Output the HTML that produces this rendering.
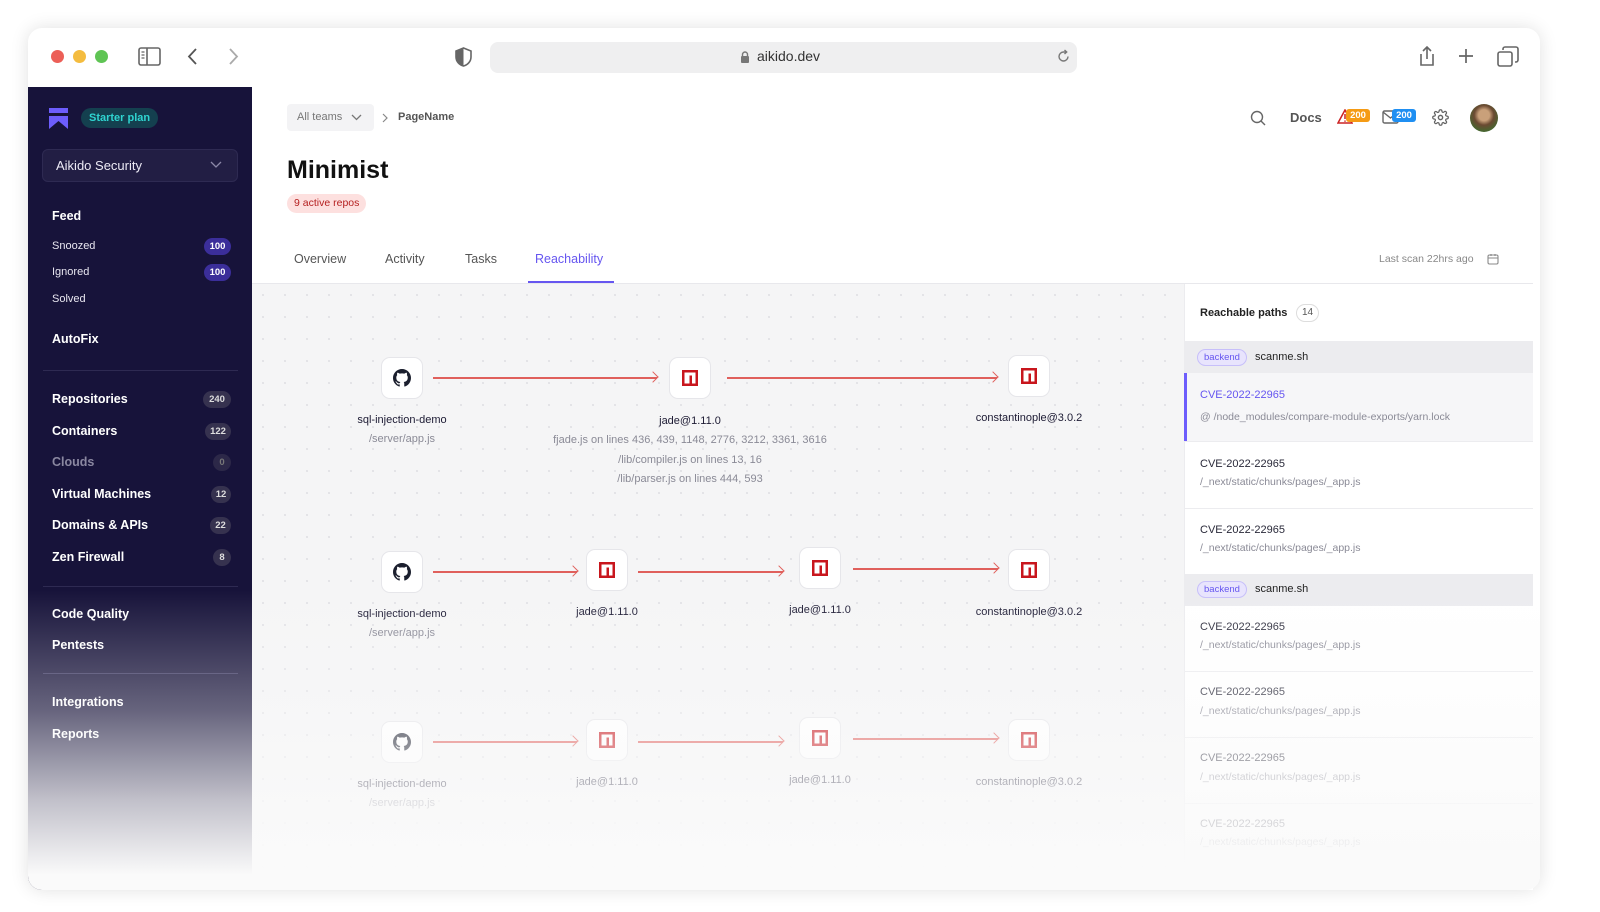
<!DOCTYPE html>
<html><head><meta charset="utf-8"><style>
*{box-sizing:border-box;margin:0;padding:0}
body{width:1600px;height:912px;background:#fff;font-family:"Liberation Sans",sans-serif;position:relative;overflow:hidden}
.a{position:absolute}
.win{left:28px;top:28px;width:1512px;height:862px;border-radius:14px;background:#fff;box-shadow:0 0 18px rgba(0,0,0,.12);overflow:hidden}
.side{left:28px;top:87px;width:224px;height:803px;background:#17133a;border-radius:0 0 0 14px}
.main{left:252px;top:93px;width:1281px;height:797px;background:#fff;border-radius:12px 12px 0 0;overflow:hidden}
.graph{left:252px;top:284px;width:932px;height:606px;background-color:#f5f5f6;background-image:radial-gradient(#e2e2e6 1px,transparent 1.2px);background-size:22px 22px}
.si{color:#fff;font-size:12.5px;font-weight:bold;left:52px}
.ss{color:#e8e6f0;font-size:11px;left:52px}
.bd{right:auto;font-size:9.5px;font-weight:bold;color:#fff;border-radius:10px;text-align:center;line-height:17px;height:17px}
.node{width:42px;height:42px;background:#fff;border:1px solid #e6e6ea;border-radius:9px;display:flex;align-items:center;justify-content:center}
.lbl{font-size:11px;color:#1c1a33;text-align:center;width:200px;margin-left:-100px}
.sub{font-size:11px;color:#8a8a96;text-align:center;width:320px;margin-left:-160px;line-height:19.5px}
.ln{height:1.5px;background:#e0605c}
.ln:after{content:"";position:absolute;right:0;top:-4px;width:7px;height:7px;border-top:1.5px solid #e0605c;border-right:1.5px solid #e0605c;transform:rotate(45deg)}
.cve{left:1200px;font-size:11px;color:#2a2a3a}
.path{left:1200px;font-size:10.5px;color:#8a8a96}
.hl{left:1184px;width:349px;height:1px;background:#ececef}
</style></head><body>
<div class="a win"></div>
<div class="a" style="left:51px;top:50px;width:13px;height:13px;border-radius:50%;background:#ec5f57"></div>
<div class="a" style="left:73px;top:50px;width:13px;height:13px;border-radius:50%;background:#f4bc3f"></div>
<div class="a" style="left:95px;top:50px;width:13px;height:13px;border-radius:50%;background:#5fc454"></div>
<svg class="a" style="left:138px;top:47px" width="23" height="19" viewBox="0 0 23 19"><rect x="1" y="1" width="21" height="17" rx="2" fill="none" stroke="#666" stroke-width="1.6"/><line x1="9" y1="1" x2="9" y2="18" stroke="#666" stroke-width="1.6"/><path d="M3.5 5h3M3.5 8h3M3.5 11h3" stroke="#666" stroke-width="1.2"/></svg>
<svg class="a" style="left:186px;top:47px" width="14" height="19"><path d="M10 2L3 9.5 10 17" fill="none" stroke="#555" stroke-width="1.8"/></svg>
<svg class="a" style="left:226px;top:47px" width="14" height="19"><path d="M4 2l7 7.5L4 17" fill="none" stroke="#aaa" stroke-width="1.8"/></svg>
<svg class="a" style="left:454px;top:47px" width="19" height="20" viewBox="0 0 19 20"><path d="M9.5 1L2 4v6c0 4.5 3.5 8 7.5 9 4-1 7.5-4.5 7.5-9V4z" fill="none" stroke="#666" stroke-width="1.6"/><path d="M9.5 1L2 4v6c0 4.5 3.5 8 7.5 9z" fill="#666"/></svg>
<div class="a" style="left:490px;top:42px;width:587px;height:31px;border-radius:8px;background:#efeff0"></div>
<svg class="a" style="left:740px;top:51px" width="10" height="13"><rect x="1" y="5" width="8" height="7" rx="1" fill="#777"/><path d="M2.5 5V3.5a2.5 2.5 0 015 0V5" fill="none" stroke="#777" stroke-width="1.4"/></svg>
<div class="a" style="left:757px;top:48px;font-size:14px;color:#333">aikido.dev</div>
<svg class="a" style="left:1056px;top:49px" width="15" height="15"><path d="M12 7.5A4.5 4.5 0 117.5 3H10" fill="none" stroke="#777" stroke-width="1.4"/><path d="M8.5 1l2.2 2-2.2 2" fill="none" stroke="#777" stroke-width="1.4"/></svg>
<svg class="a" style="left:1417px;top:45px" width="20" height="22"><path d="M10 2v12M6 6l4-4 4 4M4 9v11h12V9" fill="none" stroke="#666" stroke-width="1.6"/></svg>
<svg class="a" style="left:1457px;top:47px" width="18" height="18"><path d="M9 2v14M2 9h14" stroke="#666" stroke-width="1.7"/></svg>
<svg class="a" style="left:1497px;top:46px" width="22" height="21"><rect x="1" y="6" width="14" height="14" rx="2" fill="none" stroke="#666" stroke-width="1.6"/><path d="M6 4V3a2 2 0 012-2h11a2 2 0 012 2v11a2 2 0 01-2 2h-1" fill="none" stroke="#666" stroke-width="1.6"/></svg>

<div class="a side"></div>
<svg class="a" style="left:49px;top:108px" width="19" height="21" viewBox="0 0 19 21"><rect x="0" y="0" width="19" height="5" fill="#6d5dfc"/><path d="M0 8h19v13L9.5 13 0 21z" fill="#6d5dfc"/></svg>
<div class="a" style="left:81px;top:108px;height:20px;padding:0 8px;border-radius:10px;background:#14404f;color:#2fd4d0;font-size:11px;font-weight:bold;line-height:20px">Starter plan</div>
<div class="a" style="left:42px;top:149px;width:196px;height:33px;border-radius:6px;background:#221e44;border:1px solid #2e2a52"></div>
<div class="a" style="left:56px;top:158px;font-size:13px;color:#eceaf5">Aikido Security</div>
<svg class="a" style="left:210px;top:161px" width="12" height="8"><path d="M1 1l5 5 5-5" fill="none" stroke="#8c88a8" stroke-width="1.3"/></svg>
<div class="a si" style="top:209px">Feed</div>
<div class="a ss" style="top:240px">Snoozed</div>
<div class="a bd" style="left:204px;top:238px;width:27px;background:#3b2e9a">100</div>
<div class="a ss" style="top:266px">Ignored</div>
<div class="a bd" style="left:204px;top:264px;width:27px;background:#3b2e9a">100</div>
<div class="a ss" style="top:293px">Solved</div>
<div class="a si" style="top:332px">AutoFix</div>
<div class="a" style="left:43px;top:370px;width:195px;height:1px;background:#2e2a52"></div>
<div class="a si" style="top:392px">Repositories</div><div class="a bd" style="left:203px;top:391px;width:28px;background:#36324f;color:#ddd">240</div>
<div class="a si" style="top:424px">Containers</div><div class="a bd" style="left:205px;top:423px;width:26px;background:#36324f;color:#ddd">122</div>
<div class="a si" style="top:455px;color:#8a87a0">Clouds</div><div class="a bd" style="left:213px;top:454px;width:18px;background:#2c2848;color:#777">0</div>
<div class="a si" style="top:487px">Virtual Machines</div><div class="a bd" style="left:211px;top:486px;width:20px;background:#36324f;color:#ddd">12</div>
<div class="a si" style="top:518px">Domains &amp; APIs</div><div class="a bd" style="left:210px;top:517px;width:21px;background:#36324f;color:#ddd">22</div>
<div class="a si" style="top:550px">Zen Firewall</div><div class="a bd" style="left:213px;top:549px;width:18px;background:#36324f;color:#ddd">8</div>
<div class="a" style="left:43px;top:586px;width:195px;height:1px;background:#2e2a52"></div>
<div class="a si" style="top:607px">Code Quality</div>
<div class="a si" style="top:638px">Pentests</div>
<div class="a" style="left:43px;top:673px;width:195px;height:1px;background:#3a3660"></div>
<div class="a si" style="top:695px">Integrations</div>
<div class="a si" style="top:727px">Reports</div>

<div class="a main"></div>
<div class="a" style="left:287px;top:104px;width:87px;height:27px;border-radius:4px;background:#f3f3f5"></div>
<div class="a" style="left:297px;top:111px;font-size:11px;color:#777">All teams</div>
<svg class="a" style="left:351px;top:114px" width="11" height="8"><path d="M1 1l4.5 4.5L10 1" fill="none" stroke="#777" stroke-width="1.3"/></svg>
<svg class="a" style="left:382px;top:113px" width="7" height="10"><path d="M1 1l4 4-4 4" fill="none" stroke="#888" stroke-width="1.2"/></svg>
<div class="a" style="left:398px;top:111px;font-size:11px;color:#555;font-weight:bold">PageName</div>
<div class="a" style="left:287px;top:156px;font-size:25px;font-weight:bold;color:#111">Minimist</div>
<div class="a" style="left:287px;top:194px;height:19px;padding:0 7px;border-radius:10px;background:#fde0df;color:#b52020;font-size:10.5px;line-height:19px">9 active repos</div>
<svg class="a" style="left:1250px;top:110px" width="16" height="16"><circle cx="7" cy="7" r="5.5" fill="none" stroke="#666" stroke-width="1.4"/><path d="M11 11l4 4" stroke="#666" stroke-width="1.4"/></svg>
<div class="a" style="left:1290px;top:110px;font-size:13px;color:#555;font-weight:bold">Docs</div>
<svg class="a" style="left:1337px;top:109px" width="16" height="15"><path d="M8 1L1 14h14z" fill="none" stroke="#c22" stroke-width="1.5"/><path d="M8 5v5M8 11.5v1.2" stroke="#c22" stroke-width="1.5"/></svg>
<div class="a" style="left:1346px;top:109px;width:24px;height:13px;border-radius:3px;background:#f59b14;color:#fff;font-size:9.5px;font-weight:bold;text-align:center;line-height:13px">200</div>
<svg class="a" style="left:1382px;top:110px" width="17" height="14"><rect x="1" y="1" width="15" height="12" rx="1.5" fill="none" stroke="#666" stroke-width="1.4"/><path d="M1 2l7.5 6L16 2" fill="none" stroke="#666" stroke-width="1.4"/></svg>
<div class="a" style="left:1392px;top:109px;width:24px;height:13px;border-radius:3px;background:#1f8ff2;color:#fff;font-size:9.5px;font-weight:bold;text-align:center;line-height:13px">200</div>
<svg class="a" style="left:1432px;top:109px" width="17" height="17" viewBox="0 0 24 24"><path d="M12 15a3 3 0 100-6 3 3 0 000 6z" fill="none" stroke="#666" stroke-width="2"/><path d="M19.4 15a1.7 1.7 0 00.3 1.8l.1.1a2 2 0 11-2.8 2.8l-.1-.1a1.7 1.7 0 00-1.800-.3 1.7 1.7 0 00-1 1.5V21a2 2 0 01-4 0v-.1a1.7 1.7 0 00-1.1-1.5 1.7 1.7 0 00-1.8.3l-.1.1a2 2 0 11-2.8-2.8l.1-.1a1.7 1.7 0 00.3-1.8 1.7 1.7 0 00-1.5-1H3a2 2 0 010-4h.1a1.7 1.7 0 001.5-1.1 1.7 1.7 0 00-.3-1.8l-.1-.1a2 2 0 112.8-2.8l.1.1a1.7 1.7 0 001.8.3H9a1.7 1.7 0 001-1.5V3a2 2 0 014 0v.1a1.7 1.7 0 001 1.5 1.7 1.7 0 001.8-.3l.1-.1a2 2 0 112.8 2.8l-.1.1a1.7 1.7 0 00-.3 1.8V9a1.7 1.7 0 001.5 1H21a2 2 0 010 4h-.1a1.7 1.7 0 00-1.5 1z" fill="none" stroke="#666" stroke-width="1.8"/></svg>
<div class="a" style="left:1470px;top:104px;width:28px;height:28px;border-radius:50%;background:radial-gradient(circle at 50% 40%,#c9a07a 0 25%,#6b4a32 45%,#3f6b2f 80%)"></div>

<div class="a" style="left:294px;top:252px;font-size:12.5px;color:#555">Overview</div>
<div class="a" style="left:385px;top:252px;font-size:12.5px;color:#555">Activity</div>
<div class="a" style="left:465px;top:252px;font-size:12.5px;color:#555">Tasks</div>
<div class="a" style="left:535px;top:252px;font-size:12.5px;color:#6656f0">Reachability</div>
<div class="a" style="left:528px;top:281px;width:86px;height:2px;background:#6656f0"></div>
<div class="a" style="left:1379px;top:253px;font-size:10.5px;color:#888">Last scan 22hrs ago</div>
<svg class="a" style="left:1487px;top:253px" width="12" height="12"><rect x="1" y="2" width="10" height="9" rx="1.5" fill="none" stroke="#888" stroke-width="1.1"/><path d="M1 5h10M4 1v2M8 1v2" stroke="#888" stroke-width="1.1"/></svg>
<div class="a" style="left:252px;top:283px;width:1281px;height:1px;background:#e8e8ec"></div>

<div class="a graph"></div>

<div class="a" style="left:1184px;top:284px;width:349px;height:606px;background:#fff;border-left:1px solid #ececef"></div>
<div class="a" style="left:1200px;top:307px;font-size:11px;font-weight:bold;color:#222">Reachable paths</div>
<div class="a" style="left:1296px;top:304px;width:23px;height:18px;border-radius:9px;border:1px solid #ddd;font-size:10px;color:#555;text-align:center;line-height:16px">14</div>
<div class="a" style="left:1184px;top:341px;width:349px;height:32px;background:#ececef"></div>
<div class="a" style="left:1197px;top:349px;height:17px;padding:0 6px;border-radius:9px;border:1px solid #c7bffa;background:#e8e4fd;color:#6656f0;font-size:9.5px;line-height:15px">backend</div>
<div class="a" style="left:1255px;top:351px;font-size:11px;color:#222">scanme.sh</div>
<div class="a" style="left:1184px;top:373px;width:349px;height:68px;background:#f6f6f8"></div>
<div class="a" style="left:1184px;top:373px;width:3px;height:68px;background:#6d5dfc"></div>
<div class="a cve" style="top:389px;color:#6656f0">CVE-2022-22965</div>
<div class="a path" style="top:411px">@ /node_modules/compare-module-exports/yarn.lock</div>
<div class="a hl" style="top:441px"></div>
<div class="a cve" style="top:458px">CVE-2022-22965</div><div class="a path" style="top:476px">/_next/static/chunks/pages/_app.js</div>
<div class="a hl" style="top:508px"></div>
<div class="a cve" style="top:524px">CVE-2022-22965</div><div class="a path" style="top:542px">/_next/static/chunks/pages/_app.js</div>
<div class="a" style="left:1184px;top:574px;width:349px;height:32px;background:#ececef"></div>
<div class="a" style="left:1197px;top:581px;height:17px;padding:0 6px;border-radius:9px;border:1px solid #c7bffa;background:#e8e4fd;color:#6656f0;font-size:9.5px;line-height:15px">backend</div>
<div class="a" style="left:1255px;top:583px;font-size:11px;color:#222">scanme.sh</div>
<div class="a cve" style="top:621px">CVE-2022-22965</div><div class="a path" style="top:639px">/_next/static/chunks/pages/_app.js</div>
<div class="a hl" style="top:671px"></div>
<div class="a cve" style="top:686px">CVE-2022-22965</div><div class="a path" style="top:705px">/_next/static/chunks/pages/_app.js</div>
<div class="a hl" style="top:737px"></div>
<div class="a cve" style="top:752px">CVE-2022-22965</div><div class="a path" style="top:771px">/_next/static/chunks/pages/_app.js</div>
<div class="a hl" style="top:803px"></div>
<div class="a cve" style="top:818px">CVE-2022-22965</div><div class="a path" style="top:836px">/_next/static/chunks/pages/_app.js</div>

<svg width="0" height="0" style="position:absolute"><defs>
<symbol id="gh" viewBox="0 0 16 16"><path fill="#1b1f2e" d="M8 0C3.58 0 0 3.58 0 8c0 3.54 2.290 6.53 5.47 7.59.4.07.55-.17.55-.38 0-.19-.01-.82-.01-1.49-2.01.37-2.530-.49-2.690-.94-.09-.23-.48-.94-.82-1.13-.28-.15-.68-.52-.01-.53.63-.01 1.08.58 1.23.82.72 1.21 1.87.87 2.33.66.07-.52.28-.87.51-1.07-1.78-.2-3.64-.89-3.64-3.95 0-.87.31-1.59.82-2.15-.08-.2-.36-1.02.08-2.12 0 0 .67-.21 2.2.82.64-.18 1.32-.27 2-.27.68 0 1.36.09 2 .27 1.53-1.04 2.2-.82 2.2-.82.44 1.1.16 1.92.08 2.12.51.56.82 1.27.82 2.15 0 3.07-1.87 3.75-3.65 3.95.29.25.54.73.54 1.48 0 1.07-.01 1.93-.01 2.2 0 .21.15.46.55.38A8.013 8.013 0 0016 8c0-4.42-3.58-8-8-8z"/></symbol>
<symbol id="np" viewBox="0 0 16 16"><rect width="16" height="16" fill="#c8161d"/><rect x="2.5" y="2.5" width="11" height="11" fill="#fff"/><rect x="7" y="5.5" width="3" height="8" fill="#c8161d"/><rect x="4.5" y="5.5" width="3" height="8" fill="#fff"/></symbol>
</defs></svg>

<div class="a node" style="left:381px;top:357px"><svg width="18" height="18"><use href="#gh"/></svg></div>
<div class="a ln" style="left:433px;top:377px;width:224px"></div>
<div class="a node" style="left:669px;top:357px"><svg width="16" height="16"><use href="#np"/></svg></div>
<div class="a ln" style="left:727px;top:377px;width:270px"></div>
<div class="a node" style="left:1008px;top:355px"><svg width="16" height="16"><use href="#np"/></svg></div>
<div class="a lbl" style="left:402px;top:414px">sql-injection-demo</div>
<div class="a sub" style="left:402px;top:430px">/server/app.js</div>
<div class="a lbl" style="left:690px;top:415px">jade@1.11.0</div>
<div class="a sub" style="left:690px;top:431px">fjade.js on lines 436, 439, 1148, 2776, 3212, 3361, 3616<br>/lib/compiler.js on lines 13, 16<br>/lib/parser.js on lines 444, 593</div>
<div class="a lbl" style="left:1029px;top:412px">constantinople@3.0.2</div>

<div class="a node" style="left:381px;top:551px"><svg width="18" height="18"><use href="#gh"/></svg></div>
<div class="a ln" style="left:433px;top:571px;width:144px"></div>
<div class="a node" style="left:586px;top:549px"><svg width="16" height="16"><use href="#np"/></svg></div>
<div class="a ln" style="left:638px;top:571px;width:145px"></div>
<div class="a node" style="left:799px;top:547px"><svg width="16" height="16"><use href="#np"/></svg></div>
<div class="a ln" style="left:853px;top:568px;width:145px"></div>
<div class="a node" style="left:1008px;top:549px"><svg width="16" height="16"><use href="#np"/></svg></div>
<div class="a lbl" style="left:402px;top:608px">sql-injection-demo</div>
<div class="a sub" style="left:402px;top:624px">/server/app.js</div>
<div class="a lbl" style="left:607px;top:606px">jade@1.11.0</div>
<div class="a lbl" style="left:820px;top:604px">jade@1.11.0</div>
<div class="a lbl" style="left:1029px;top:606px">constantinople@3.0.2</div>

<div class="a node" style="left:381px;top:721px"><svg width="18" height="18"><use href="#gh"/></svg></div>
<div class="a ln" style="left:433px;top:741px;width:144px"></div>
<div class="a node" style="left:586px;top:719px"><svg width="16" height="16"><use href="#np"/></svg></div>
<div class="a ln" style="left:638px;top:741px;width:145px"></div>
<div class="a node" style="left:799px;top:717px"><svg width="16" height="16"><use href="#np"/></svg></div>
<div class="a ln" style="left:853px;top:738px;width:145px"></div>
<div class="a node" style="left:1008px;top:719px"><svg width="16" height="16"><use href="#np"/></svg></div>
<div class="a lbl" style="left:402px;top:778px">sql-injection-demo</div>
<div class="a sub" style="left:402px;top:794px">/server/app.js</div>
<div class="a lbl" style="left:607px;top:776px">jade@1.11.0</div>
<div class="a lbl" style="left:820px;top:774px">jade@1.11.0</div>
<div class="a lbl" style="left:1029px;top:776px">constantinople@3.0.2</div>

<div class="a" style="left:28px;top:590px;width:1512px;height:300px;background:linear-gradient(rgba(250,250,250,0) 0%,rgba(250,250,250,.35) 40%,rgba(250,250,250,.75) 70%,#fafafa 95%);border-radius:0 0 14px 14px"></div>
</body></html>
